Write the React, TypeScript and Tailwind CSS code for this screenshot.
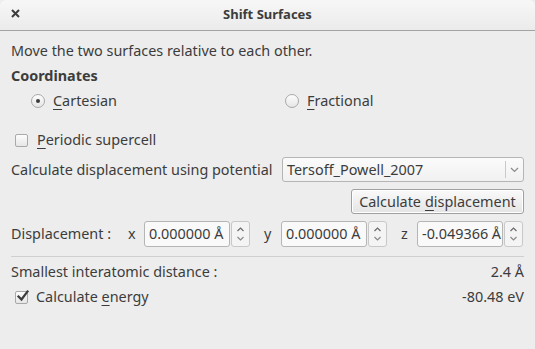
import React from "react";

const U = ({ children }: { children: React.ReactNode }) => (
  <span className="underline decoration-1 underline-offset-[3px]">{children}</span>
);

function Radio({ checked }: { checked?: boolean }) {
  return (
    <span className="flex h-[14px] w-[14px] items-center justify-center rounded-full border border-[#a9a9a9] bg-gradient-to-b from-[#fdfdfd] to-[#e6e6e6]">
      {checked && <span className="h-[4px] w-[4px] rounded-full bg-[#3c3c3c]" />}
    </span>
  );
}

function Check({ checked }: { checked?: boolean }) {
  return (
    <span className="relative flex h-[13px] w-[13px] items-center justify-center rounded-[2px] border border-[#a9a9a9] bg-gradient-to-b from-[#fdfdfd] to-[#e6e6e6]">
      {checked && (
        <svg width="14" height="14" viewBox="0 0 14 14" className="absolute left-[0px] top-[-3px]">
          <path d="M2.5 7.5 L5.5 10.5 L11.5 2.5" stroke="#3c3c3c" strokeWidth="2.2" fill="none" strokeLinecap="square" />
        </svg>
      )}
    </span>
  );
}

function Spin({ value }: { value: string }) {
  return (
    <div className="flex h-[26px] items-stretch">
      <div className="flex w-[86px] items-center rounded-[3px] border border-[#b5b5b5] bg-[#f9f9f9] pl-[4px] text-[#3c3c3c]">
        {value}
      </div>
      <div className="ml-[1px] flex w-[19px] flex-col items-center justify-center rounded-[3px] border border-[#c8c8c8] bg-[#f4f4f4]">
        <svg width="9" height="18" viewBox="0 0 9 18">
          <path d="M1.5 6 L4.5 3 L7.5 6" stroke="#6a6a6a" strokeWidth="1.2" fill="none" />
          <path d="M1.5 12 L4.5 15 L7.5 12" stroke="#8a8a8a" strokeWidth="1.2" fill="none" />
        </svg>
      </div>
    </div>
  );
}

export default function App() {
  return (
    <div
      className="flex h-[349px] w-[535px] flex-col overflow-hidden bg-[#ededed] text-[14.4px] text-[#3c3c3c]"
      style={{ fontFamily: '"Noto Sans", "Open Sans", sans-serif' }}
    >
      <div className="relative flex h-[31px] shrink-0 items-center justify-center rounded-t-[6px] border-b border-[#a3a3a3] bg-gradient-to-b from-[#f7f7f7] to-[#ebebeb]">
        <span className="absolute left-[10px] top-[8px]">
          <svg width="11" height="11" viewBox="0 0 11 11">
            <path d="M2 2 L9 9 M9 2 L2 9" stroke="#3c3c3c" strokeWidth="2" />
          </svg>
        </span>
        <span className="text-[13px] font-bold text-[#3c3c3c]">Shift Surfaces</span>
      </div>

      <div className="flex flex-col px-[11px]">
        <div className="mt-[10px] leading-[20px]">Move the two surfaces relative to each other.</div>
        <div className="mt-[5px] font-bold leading-[20px]">Coordinates</div>
        <div className="mt-[5px] flex h-[20px] items-center">
          <div className="flex w-[274px] items-center pl-[20px]">
            <Radio checked />
            <span className="ml-[8px]"><U>C</U>artesian</span>
          </div>
          <div className="flex items-center">
            <Radio />
            <span className="ml-[8px]"><U>F</U>ractional</span>
          </div>
        </div>
        <div className="mt-[19px] flex h-[20px] items-center pl-[4px]">
          <Check />
          <span className="ml-[9px]"><U>P</U>eriodic supercell</span>
        </div>
        <div className="mt-[7px] flex items-center justify-between">
          <span>Calculate displacement using potential</span>
          <div className="flex h-[25px] w-[242px] items-center rounded-[3px] border border-[#b5b5b5] bg-gradient-to-b from-[#fbfbfb] to-[#f1f1f1] pl-[4px]">
            <span className="flex-1">Tersoff_Powell_2007</span>
            <div className="flex h-[17px] w-[18px] items-center justify-center border-l border-[#c9c9c9]">
              <svg width="9" height="6" viewBox="0 0 9 6">
                <path d="M1 1 L4.5 4.5 L8 1" stroke="#8a8a8a" strokeWidth="1.2" fill="none" />
              </svg>
            </div>
          </div>
        </div>
        <div className="mt-[7px] flex justify-end">
          <div className="flex h-[25px] w-[173px] items-center justify-center rounded-[3px] border border-[#a0a0a0] bg-gradient-to-b from-[#fafafa] to-[#e4e4e4] shadow-[inset_0_0_0_1px_#ffffff]">
            Calculate <span className="ml-[4px]"><U>d</U>isplacement</span>
          </div>
        </div>
        <div className="mt-[7px] flex h-[26px] items-center">
          <span className="w-[117px]">Displacement :</span>
          <span className="w-[16px]">x</span>
          <Spin value="0.000000 Å" />
          <span className="ml-[14px] w-[17px]">y</span>
          <Spin value="0.000000 Å" />
          <span className="ml-[14px] w-[16px]">z</span>
          <Spin value="-0.049366 Å" />
        </div>
        <div className="mt-[9px] h-[1px] bg-[#cfcfcf]" />
        <div className="mt-[5px] flex h-[20px] items-center justify-between">
          <span>Smallest interatomic distance :</span>
          <span>2.4 Å</span>
        </div>
        <div className="mt-[5px] flex h-[20px] items-center justify-between">
          <div className="flex items-center pl-[4px]">
            <Check checked />
            <span className="ml-[8px]">Calculate <U>e</U>nergy</span>
          </div>
          <span>-80.48 eV</span>
        </div>
      </div>
    </div>
  );
}
